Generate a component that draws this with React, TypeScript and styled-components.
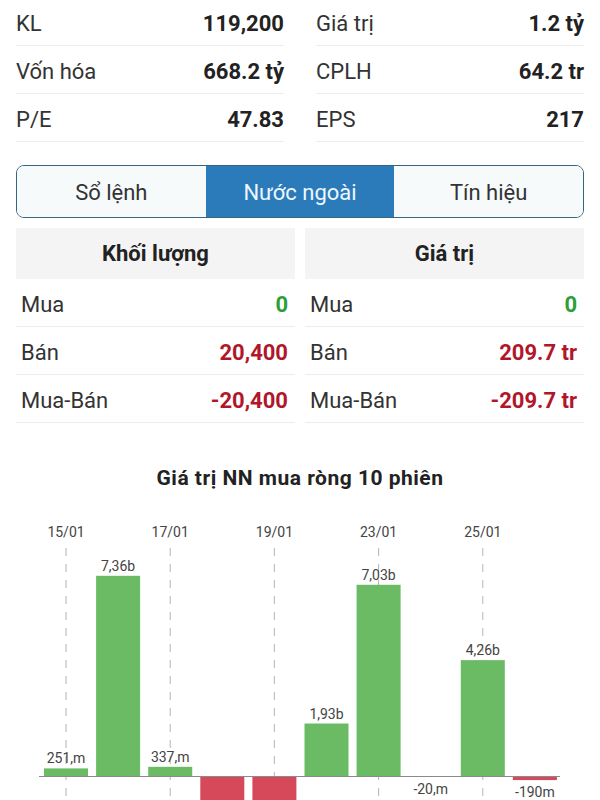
import React from "react";
import styled, { createGlobalStyle } from "styled-components";

const GlobalStyle = createGlobalStyle`
  html, body { margin: 0; padding: 0; background: #ffffff; }
  body { font-family: Roboto, "Noto Sans", "Liberation Sans", sans-serif; color: #222; }
`;

const Page = styled.div`
  margin-top: -2px;
  padding: 0 16px;
`;

const StatsGrid = styled.div`
  display: grid;
  grid-template-columns: 1fr 1fr;
  column-gap: 32px;
`;

const StatRow = styled.div`
  display: flex;
  align-items: center;
  justify-content: space-between;
  height: 48px;
  box-sizing: border-box;
  padding-top: 3px;
  border-bottom: 1px solid #ececec;
  font-size: 22px;
`;

const Label = styled.span`
  color: #333;
`;

const Value = styled.span<{ $tone?: "up" | "down" }>`
  font-weight: 700;
  color: ${(p) => (p.$tone === "up" ? "#2e9e3b" : p.$tone === "down" ? "#b1172b" : "#222")};
`;

const Tabs = styled.div`
  margin-top: 23px;
  display: grid;
  grid-template-columns: 1fr 1fr 1fr;
  height: 53px;
  box-sizing: border-box;
  border: 1.5px solid #35667f;
  border-radius: 8px;
  overflow: hidden;
`;

const Tab = styled.div<{ $active?: boolean }>`
  display: flex;
  align-items: center;
  justify-content: center;
  padding-top: 2px;
  font-size: 22px;
  background: ${(p) => (p.$active ? "#2b7bba" : "#f6fafb")};
  color: ${(p) => (p.$active ? "#eef7ff" : "#333")};
`;

const ForeignGrid = styled.div`
  margin-top: 10px;
  display: grid;
  grid-template-columns: 1fr 1fr;
  column-gap: 10px;
`;

const Panel = styled.div`
  display: flex;
  flex-direction: column;
`;

const PanelHeader = styled.div`
  height: 51px;
  display: flex;
  align-items: center;
  justify-content: center;
  background: #f4f4f4;
  font-size: 22px;
  font-weight: 700;
  color: #222;
`;

const PanelRow = styled.div`
  display: flex;
  align-items: center;
  justify-content: space-between;
  height: 48px;
  box-sizing: border-box;
  padding: 3px 7px 0 5px;
  border-bottom: 1px solid #ececec;
  font-size: 22px;
`;

const ChartTitle = styled.div`
  margin-top: 43px;
  text-align: center;
  font-size: 21px;
  letter-spacing: 0.5px;
  line-height: 24px;
  font-weight: 700;
  color: #222;
`;

const ChartSvg = styled.svg`
  display: block;
  margin-top: 10px;
  font-family: Roboto, "Noto Sans", "Liberation Sans", sans-serif;
`;

type Bar = { date: string; v: number; label: string };

const bars: Bar[] = [
  { date: "15/01", v: 0.28, label: "251,m" },
  { date: "16/01", v: 7.36, label: "7,36b" },
  { date: "17/01", v: 0.337, label: "337,m" },
  { date: "18/01", v: -2.3, label: "" },
  { date: "19/01", v: -2.1, label: "" },
  { date: "22/01", v: 1.93, label: "1,93b" },
  { date: "23/01", v: 7.03, label: "7,03b" },
  { date: "24/01", v: -0.02, label: "-20,m" },
  { date: "25/01", v: 4.26, label: "4,26b" },
  { date: "26/01", v: -0.15, label: "-190m" },
];

const BASE = 776;
const SCALE = 27.2;
const X0 = 66;
const STEP = 52.1;
const BW = 44;

function Chart() {
  return (
    <ChartSvg width={568} height={300} viewBox="16 500 568 300">
      {bars.map((b, i) =>
        i % 2 === 0 ? (
          <g key={"g" + i}>
            <text x={X0 + STEP * i} y={537} textAnchor="middle" fontSize={14} fill="#444">
              {b.date}
            </text>
            <line
              x1={X0 + STEP * i}
              x2={X0 + STEP * i}
              y1={548}
              y2={800}
              stroke="#b4b4b4"
              strokeWidth={1}
              strokeDasharray="8 8"
            />
          </g>
        ) : null
      )}
      {bars.map((b, i) => {
        const cx = X0 + STEP * i;
        const h = Math.max(Math.abs(b.v) * SCALE, 0.6);
        const y = b.v >= 0 ? BASE - h : BASE;
        return (
          <g key={"b" + i}>
            <rect x={cx - BW / 2} y={y} width={BW} height={h} fill={b.v >= 0 ? "#6abb64" : "#d6495b"} />
            {b.label ? (
              <text
                x={cx}
                y={b.v >= 0 ? y - 5 : y + h + 17}
                textAnchor="middle"
                fontSize={14}
                fill="#444"
              >
                {b.label}
              </text>
            ) : null}
          </g>
        );
      })}
      <line x1={39} x2={560} y1={BASE + 0.5} y2={BASE + 0.5} stroke="#8a8a8a" strokeWidth={1} />
    </ChartSvg>
  );
}

const stats: [string, string, string, string][] = [
  ["KL", "119,200", "Giá trị", "1.2 tỷ"],
  ["Vốn hóa", "668.2 tỷ", "CPLH", "64.2 tr"],
  ["P/E", "47.83", "EPS", "217"],
];

type Tone = "up" | "down";
const volRows: [string, string, Tone][] = [
  ["Mua", "0", "up"],
  ["Bán", "20,400", "down"],
  ["Mua-Bán", "-20,400", "down"],
];
const valRows: [string, string, Tone][] = [
  ["Mua", "0", "up"],
  ["Bán", "209.7 tr", "down"],
  ["Mua-Bán", "-209.7 tr", "down"],
];

export default function App() {
  return (
    <>
      <GlobalStyle />
      <Page>
        <StatsGrid>
          {stats.map(([l1, v1, l2, v2]) => (
            <React.Fragment key={l1}>
              <StatRow>
                <Label>{l1}</Label>
                <Value>{v1}</Value>
              </StatRow>
              <StatRow>
                <Label>{l2}</Label>
                <Value>{v2}</Value>
              </StatRow>
            </React.Fragment>
          ))}
        </StatsGrid>

        <Tabs>
          <Tab>Sổ lệnh</Tab>
          <Tab $active>Nước ngoài</Tab>
          <Tab>Tín hiệu</Tab>
        </Tabs>

        <ForeignGrid>
          <Panel>
            <PanelHeader>Khối lượng</PanelHeader>
            {volRows.map(([l, v, t]) => (
              <PanelRow key={l}>
                <Label>{l}</Label>
                <Value $tone={t}>{v}</Value>
              </PanelRow>
            ))}
          </Panel>
          <Panel>
            <PanelHeader>Giá trị</PanelHeader>
            {valRows.map(([l, v, t]) => (
              <PanelRow key={l}>
                <Label>{l}</Label>
                <Value $tone={t}>{v}</Value>
              </PanelRow>
            ))}
          </Panel>
        </ForeignGrid>

        <ChartTitle>Giá trị NN mua ròng 10 phiên</ChartTitle>
        <Chart />
      </Page>
    </>
  );
}
